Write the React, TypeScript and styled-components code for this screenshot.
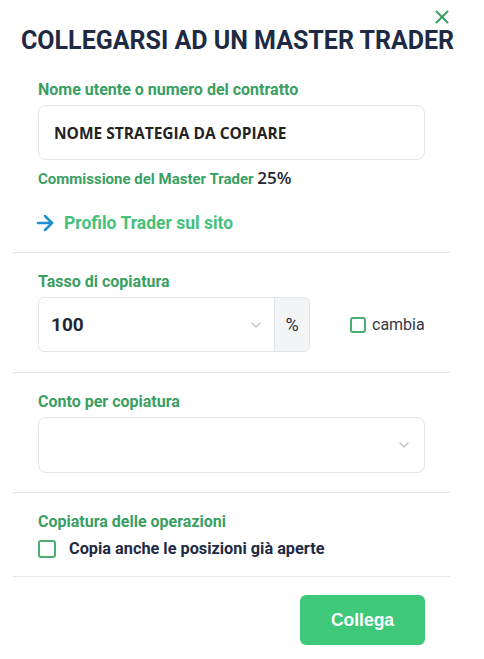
import styled, { createGlobalStyle } from 'styled-components'
import { ArrowRight, ChevronDown, X } from 'lucide-react'

const GlobalStyle = createGlobalStyle`
  html, body {
    margin: 0;
    padding: 0;
    background: #ffffff;
  }
  * {
    box-sizing: border-box;
  }
`

const Modal = styled.div`
  position: relative;
  width: 484px;
  min-height: 659px;
  padding-top: 26px;
  background: #ffffff;
  font-family: Roboto, 'Liberation Sans', sans-serif;
`

const CloseButton = styled.button`
  position: absolute;
  top: 6px;
  left: 431px;
  display: flex;
  padding: 0;
  border: none;
  background: transparent;
  color: #3a9f63;
  cursor: pointer;
`

const Title = styled.h2`
  margin: 0;
  padding-left: 21px;
  font-size: 25px;
  line-height: 29px;
  font-weight: 700;
  color: #1e2a43;
  white-space: nowrap;
`

interface SectionProps {
  top: number
  bottom: number
  last?: boolean
}

const Section = styled.div<SectionProps>`
  margin: 0 34px 0 13px;
  padding: ${({ top, bottom }) => `${top}px 25px ${bottom}px`};
  border-bottom: ${({ last }) => (last ? 'none' : '1px solid #e4e6eb')};
`

const Label = styled.div`
  margin-bottom: 6px;
  font-size: 16px;
  line-height: 18px;
  font-weight: 700;
  color: #3a9f63;
`

const TextInput = styled.div`
  display: flex;
  align-items: center;
  height: 55px;
  padding: 0 15px;
  border: 1px solid #e3e5e9;
  border-radius: 8px;
  font-family: 'Open Sans', sans-serif;
  font-size: 15.5px;
  font-weight: 700;
  color: #232323;
`

const Commission = styled.div`
  margin-top: 8px;
  font-size: 15px;
  line-height: 20px;
  font-weight: 700;
  color: #3a9f63;
`

const CommissionValue = styled.span`
  font-family: 'Open Sans', sans-serif;
  font-size: 17px;
  font-weight: 600;
  color: #232631;
`

const ProfileLink = styled.a`
  display: flex;
  align-items: center;
  gap: 7px;
  margin-top: 22px;
  margin-left: -5px;
  font-size: 17.5px;
  line-height: 22px;
  font-weight: 700;
  color: #46c17a;
  text-decoration: none;
  svg {
    color: #1f8fd0;
  }
`

const RateRow = styled.div`
  display: flex;
  align-items: center;
  gap: 40px;
`

const InputGroup = styled.div`
  display: flex;
  width: 272px;
  height: 55px;
  border: 1px solid #e3e5e9;
  border-radius: 6px;
  overflow: hidden;
`

const SelectBox = styled.div`
  display: flex;
  align-items: center;
  justify-content: flex-end;
  height: 56px;
  padding: 0 12px 0 13px;
  border: 1px solid #e3e5e9;
  border-radius: 8px;
  color: #bfc3ca;
`

const GroupSelect = styled.div`
  display: flex;
  align-items: center;
  justify-content: space-between;
  flex: 1;
  padding: 0 10px 0 12px;
  color: #bfc3ca;
`

const RateValue = styled.span`
  font-size: 19px;
  font-weight: 700;
  color: #1f2636;
`

const Addon = styled.div`
  display: flex;
  align-items: center;
  justify-content: center;
  width: 35px;
  background: #f3f4f6;
  border-left: 1px solid #e3e5e9;
  font-size: 18px;
  color: #2a2f3a;
`

interface BoxProps {
  size: number
}

const CheckBox = styled.span<BoxProps>`
  display: inline-block;
  flex: none;
  width: ${({ size }) => size}px;
  height: ${({ size }) => size}px;
  border: 2px solid #4cae70;
  border-radius: 3px;
  background: #ffffff;
`

const CheckLabel = styled.label<{ bold?: boolean; gap: number }>`
  display: flex;
  align-items: center;
  gap: ${({ gap }) => gap}px;
  font-size: ${({ bold }) => (bold ? 16.3 : 16)}px;
  font-weight: ${({ bold }) => (bold ? 700 : 400)};
  color: ${({ bold }) => (bold ? '#1e2a43' : '#333842')};
  cursor: pointer;
`

const OptionRow = styled.div`
  margin-top: 8px;
`

const Footer = styled.div`
  display: flex;
  justify-content: flex-end;
  padding: 18px 59px 14px 0;
`

const ConnectButton = styled.button`
  width: 125px;
  height: 50px;
  border: none;
  border-radius: 6px;
  background: #3ec97a;
  color: #ffffff;
  font-family: 'Liberation Sans', Arial, sans-serif;
  font-size: 17.5px;
  font-weight: 700;
  cursor: pointer;
`

export default function App() {
  return (
    <>
      <GlobalStyle />
      <Modal>
        <CloseButton aria-label="chiudi">
          <X size={22} strokeWidth={2.2} />
        </CloseButton>
        <Title>COLLEGARSI AD UN MASTER TRADER</Title>

        <Section top={26} bottom={17}>
          <Label>Nome utente o numero del contratto</Label>
          <TextInput>NOME STRATEGIA DA COPIARE</TextInput>
          <Commission>
            Commissione del Master Trader <CommissionValue>25%</CommissionValue>
          </Commission>
          <ProfileLink href="#">
            <ArrowRight size={24} strokeWidth={2.5} />
            Profilo Trader sul sito
          </ProfileLink>
        </Section>

        <Section top={20} bottom={20}>
          <Label>Tasso di copiatura</Label>
          <RateRow>
            <InputGroup>
              <GroupSelect>
                <RateValue>100</RateValue>
                <ChevronDown size={16} strokeWidth={2} />
              </GroupSelect>
              <Addon>%</Addon>
            </InputGroup>
            <CheckLabel gap={6}>
              <CheckBox size={16} />
              cambia
            </CheckLabel>
          </RateRow>
        </Section>

        <Section top={20} bottom={19}>
          <Label>Conto per copiatura</Label>
          <SelectBox>
            <ChevronDown size={16} strokeWidth={2} />
          </SelectBox>
        </Section>

        <Section top={20} bottom={18}>
          <Label>Copiatura delle operazioni</Label>
          <OptionRow>
            <CheckLabel bold gap={13}>
              <CheckBox size={18} />
              Copia anche le posizioni già aperte
            </CheckLabel>
          </OptionRow>
        </Section>

        <Footer>
          <ConnectButton>Collega</ConnectButton>
        </Footer>
      </Modal>
    </>
  )
}
